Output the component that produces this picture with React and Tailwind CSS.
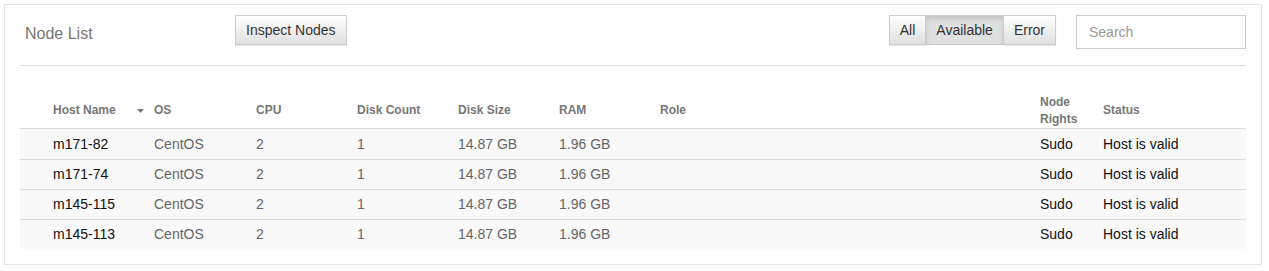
const rows = [
  { host: "m171-82" },
  { host: "m171-74" },
  { host: "m145-115" },
  { host: "m145-113" },
];

const cols = "grid grid-cols-[25px_101px_102px_101px_101px_101px_101px_380px_63px_1fr]";

function Btn({ children, active, className = "" }) {
  return (
    <button
      className={
        "h-[30px] border border-[#ccc] text-[14px] text-[#333] px-[10px] " +
        (active
          ? "bg-[#e0e0e0] shadow-[inset_0_3px_5px_rgba(0,0,0,0.125)] "
          : "bg-gradient-to-b from-white to-[#e0e0e0] shadow-[0_1px_1px_rgba(0,0,0,0.075)] ") +
        className
      }
    >
      {children}
    </button>
  );
}

export default function App() {
  return (
    <div className="bg-white w-[1269px] h-[271px] pt-[4px] pl-[4px] font-['Liberation_Sans',Arial,sans-serif]">
      <div className="w-[1258px] h-[261px] border border-[#e3e3e3] px-[15px] pt-[10px]">
        {/* cabecera */}
        <div className="flex items-start">
          <div className="w-[215px] pl-[5px] pt-[7px] text-[16px] text-[#777]">Node List</div>
          <Btn>Inspect Nodes</Btn>
          <div className="ml-auto flex">
            <Btn className="px-[9px]">All</Btn>
            <Btn active className="-ml-px">Available</Btn>
            <Btn className="-ml-px">Error</Btn>
          </div>
          <input
            placeholder="Search"
            className="ml-[20px] w-[170px] h-[34px] border border-[#ccc] px-[12px] text-[14px] text-[#555] placeholder:text-[#999] outline-none"
          />
        </div>
        <div className="mt-[16px] border-t border-[#ddd]" />

        {/* tabla */}
        <div className="mt-[27px]">
          <div className={cols + " h-[36px] items-center text-[12px] font-bold text-[#777] leading-[17px] border-b border-[#ddd]"}>
            <div />
            <div className="px-[8px] flex items-center whitespace-nowrap">
              <span>Host Name</span>
              <svg className="ml-[21px] shrink-0" width="7" height="4" viewBox="0 0 7 4">
                <path d="M0 0h7L3.5 4z" fill="#777" />
              </svg>
            </div>
            <div className="px-[8px]">OS</div>
            <div className="px-[8px]">CPU</div>
            <div className="px-[8px] whitespace-nowrap">Disk Count</div>
            <div className="px-[8px]">Disk Size</div>
            <div className="px-[8px]">RAM</div>
            <div className="px-[8px]">Role</div>
            <div className="px-[8px] w-[50px] box-content">Node Rights</div>
            <div className="px-[8px]">Status</div>
          </div>
          {rows.map((r, i) => (
            <div
              key={r.host}
              className={cols + " h-[30px] items-center bg-[#f9f9f9] text-[14px] text-[#666] " + (i > 0 ? "border-t border-[#ddd]" : "")}
            >
              <div />
              <div className="px-[8px] text-[#111]">{r.host}</div>
              <div className="px-[8px]">CentOS</div>
              <div className="px-[8px]">2</div>
              <div className="px-[8px]">1</div>
              <div className="px-[8px]">14.87 GB</div>
              <div className="px-[8px]">1.96 GB</div>
              <div className="px-[8px]" />
              <div className="px-[8px] text-[#111]">Sudo</div>
              <div className="px-[8px] text-[#111]">Host is valid</div>
            </div>
          ))}
        </div>
      </div>
    </div>
  );
}
